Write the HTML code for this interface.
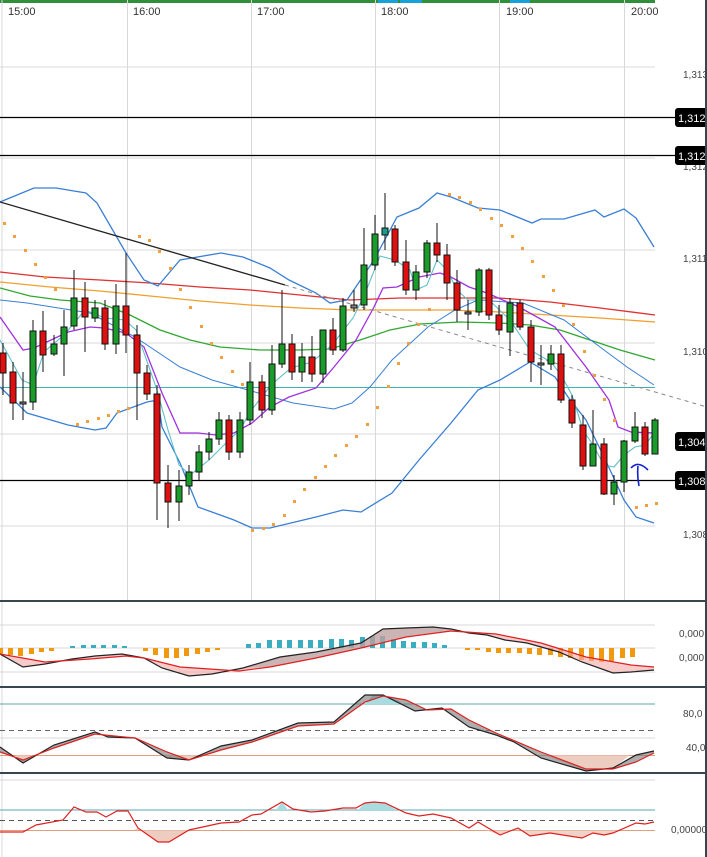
<!DOCTYPE html>
<html><head><meta charset="utf-8"><style>
html,body{margin:0;padding:0;background:#fff;}
svg{display:block;font-family:"Liberation Sans",sans-serif;}
</style></head><body>
<svg width="707" height="857" viewBox="0 0 707 857" xmlns="http://www.w3.org/2000/svg">
<rect width="707" height="857" fill="#fff"/>
<!-- top bar -->
<rect x="0" y="0" width="655" height="3" fill="#2f8f3a"/>
<rect x="378" y="0" width="20" height="3" fill="#18a0d8"/>
<rect x="400" y="0" width="22" height="3" fill="#18a0d8"/>
<rect x="510" y="0" width="20" height="3" fill="#18a0d8"/>
<!-- grid vertical -->
<g stroke="#d8d8d8" stroke-width="1">
<line x1="2" y1="0" x2="2" y2="857"/>
<line x1="127.5" y1="0" x2="127.5" y2="601"/>
<line x1="251.5" y1="0" x2="251.5" y2="601"/>
<line x1="375.5" y1="0" x2="375.5" y2="601"/>
<line x1="499.5" y1="0" x2="499.5" y2="601"/>
<line x1="624.5" y1="0" x2="624.5" y2="601"/>
<line x1="0" y1="67" x2="655" y2="67"/>
<line x1="0" y1="158" x2="655" y2="158"/>
<line x1="0" y1="250" x2="655" y2="250"/>
<line x1="0" y1="343" x2="655" y2="343"/>
<line x1="0" y1="434" x2="655" y2="434"/>
<line x1="0" y1="526" x2="655" y2="526"/>
<line x1="0" y1="625" x2="655" y2="625"/>
<line x1="0" y1="648" x2="655" y2="648"/>
<line x1="0" y1="672" x2="655" y2="672"/>
<line x1="0" y1="738" x2="655" y2="738"/>
<line x1="0" y1="780" x2="655" y2="780"/>
</g>
<!-- time labels -->
<g font-size="11" fill="#333">
<text x="8" y="15">15:00</text><text x="133" y="15">16:00</text><text x="257" y="15">17:00</text>
<text x="381" y="15">18:00</text><text x="506" y="15">19:00</text><text x="631" y="15">20:00</text>
</g>
<!-- price labels -->
<g font-size="10" fill="#444">
<text x="683" y="78">1,313</text><text x="683" y="170">1,312</text><text x="683" y="262">1,311</text>
<text x="683" y="355">1,310</text><text x="683" y="538">1,308</text>
<text x="679" y="637">0,000</text><text x="679" y="661">0,000</text>
<text x="683" y="717">80,0</text><text x="686" y="751">40,0</text>
<text x="671" y="833">0,00000</text>
</g>
<!-- horizontal lines -->
<line x1="0" y1="117.5" x2="707" y2="117.5" stroke="#000" stroke-width="1.3"/>
<line x1="0" y1="155.5" x2="707" y2="155.5" stroke="#000" stroke-width="1.3"/>
<line x1="0" y1="480.5" x2="707" y2="480.5" stroke="#000" stroke-width="1.3"/>
<line x1="0" y1="387.5" x2="655" y2="387.5" stroke="#3bb3b3" stroke-width="1"/>
<!-- MAs -->
<g fill="none" stroke-width="1.3">
<polyline stroke="#e03030" points="0,272 45,277 100,280 150,283 200,287 250,290 300,295 350,300 400,298 450,298 500,298 550,302 600,308 655,315"/>
<polyline stroke="#f0a030" points="0,282 50,287 100,291 150,296 200,301 250,305 300,308 350,310 400,310 450,310 500,312 550,315 600,318 655,322"/>
<polyline stroke="#30a830" points="0,288 30,296 60,300 100,303 130,315 160,330 190,340 220,347 260,350 300,350 330,349 360,340 390,330 420,324 460,322 500,323 530,325 560,330 590,340 620,350 655,360"/>
<polyline stroke="#3a7fd5" points="0,202 34,188 56,188 86,193 97,203 126,253 144,280 158,286 180,260 221,253 243,257 270,268 289,280 316,293 330,303 347,300 374,260 397,217 419,208 437,193 451,197 478,208 500,210 532,223 541,219 564,219 595,210 604,217 624,209 636,218 654,247"/>
<polyline stroke="#3a7fd5" points="0,387 27,413 68,425 95,430 106,428 117,413 147,402 158,400 162,427 180,463 198,507 234,520 252,528 270,528 316,517 343,510 361,512 392,493 419,460 451,423 478,390 500,380 530,362 555,377 568,397 586,420 604,457 624,500 636,517 654,523"/>
<polyline stroke="#3a7fd5" stroke-width="1" points="0,300 27,303 90,313 135,337 180,367 212,380 248,390 293,403 334,409 352,403 370,387 392,360 428,327 455,310 478,300 523,303 564,320 600,347 627,367 654,385"/>
<polyline stroke="#a030e0" points="0,317 23,350 34,348 68,332 90,327 104,328 126,333 144,347 162,393 180,433 198,433 216,435 234,433 252,423 270,407 289,397 316,388 334,367 356,340 374,307 383,288 397,287 419,277 440,273 451,277 469,287 487,293 496,297 519,307 555,327 586,367 609,400 618,427 631,432 654,433"/>
<polyline stroke="#5ec0c8" stroke-width="1.1" points="0,340 22,380 33,385 44,352 64,335 85,310 105,318 125,320 136,330 157,390 168,430 179,465 190,475 209,460 229,440 240,430 250,412 271,385 291,368 312,362 332,345 353,318 364,296 380,256 395,260 410,270 416,290 427,285 437,260 447,270 457,290 468,300 479,300 489,300 510,320 530,350 551,362 561,375 572,395 583,430 593,445 604,465 614,467 624,455 635,447 645,445 655,432"/>
</g>
<line x1="0" y1="202" x2="285" y2="285" stroke="#222" stroke-width="1.3"/>
<line x1="285" y1="285" x2="707" y2="407" stroke="#888" stroke-width="1" stroke-dasharray="4,4"/>
<!-- SAR dots -->
<g fill="#f0a040">
<rect x="3" y="222" width="3" height="3"/><rect x="13" y="235" width="3" height="3"/><rect x="24" y="249" width="3" height="3"/><rect x="34" y="263" width="3" height="3"/><rect x="44" y="276" width="3" height="3"/><rect x="54" y="288" width="3" height="3"/>
<rect x="76" y="423" width="3" height="3"/><rect x="86" y="420" width="3" height="3"/><rect x="97" y="417" width="3" height="3"/><rect x="107" y="414" width="3" height="3"/><rect x="117" y="410" width="3" height="3"/><rect x="127" y="407" width="3" height="3"/>
<rect x="138" y="235" width="3" height="3"/><rect x="148" y="239" width="3" height="3"/><rect x="158" y="250" width="3" height="3"/><rect x="169" y="267" width="3" height="3"/><rect x="179" y="288" width="3" height="3"/><rect x="189" y="306" width="3" height="3"/><rect x="200" y="325" width="3" height="3"/><rect x="210" y="342" width="3" height="3"/><rect x="220" y="356" width="3" height="3"/><rect x="231" y="370" width="3" height="3"/><rect x="241" y="383" width="3" height="3"/>
<rect x="251" y="529" width="3" height="3"/><rect x="262" y="527" width="3" height="3"/><rect x="272" y="523" width="3" height="3"/><rect x="283" y="514" width="3" height="3"/><rect x="293" y="500" width="3" height="3"/><rect x="303" y="488" width="3" height="3"/><rect x="314" y="476" width="3" height="3"/><rect x="324" y="465" width="3" height="3"/><rect x="334" y="454" width="3" height="3"/><rect x="345" y="444" width="3" height="3"/><rect x="355" y="435" width="3" height="3"/><rect x="366" y="423" width="3" height="3"/><rect x="376" y="406" width="3" height="3"/><rect x="387" y="385" width="3" height="3"/><rect x="397" y="362" width="3" height="3"/><rect x="407" y="342" width="3" height="3"/><rect x="417" y="323" width="3" height="3"/><rect x="428" y="308" width="3" height="3"/>
<rect x="448" y="193" width="3" height="3"/><rect x="458" y="196" width="3" height="3"/><rect x="469" y="201" width="3" height="3"/><rect x="479" y="208" width="3" height="3"/><rect x="490" y="217" width="3" height="3"/><rect x="500" y="224" width="3" height="3"/><rect x="511" y="235" width="3" height="3"/><rect x="521" y="247" width="3" height="3"/><rect x="531" y="260" width="3" height="3"/><rect x="542" y="275" width="3" height="3"/><rect x="552" y="289" width="3" height="3"/><rect x="562" y="304" width="3" height="3"/><rect x="572" y="323" width="3" height="3"/><rect x="583" y="350" width="3" height="3"/><rect x="593" y="374" width="3" height="3"/><rect x="603" y="398" width="3" height="3"/><rect x="613" y="419" width="3" height="3"/>
<rect x="635" y="506" width="3" height="3"/><rect x="645" y="504" width="3" height="3"/><rect x="655" y="502" width="3" height="3"/>
</g>
<!-- candles -->
<g stroke="#111" stroke-width="1">
<g id="w">
<line x1="3" y1="343" x2="3" y2="395"/><line x1="13" y1="362" x2="13" y2="420"/><line x1="23" y1="372" x2="23" y2="420"/><line x1="33" y1="320" x2="33" y2="410"/><line x1="43" y1="311" x2="43" y2="372"/><line x1="54" y1="335" x2="54" y2="356"/><line x1="64" y1="310" x2="64" y2="376"/><line x1="74" y1="270" x2="74" y2="330"/><line x1="85" y1="282" x2="85" y2="352"/><line x1="95" y1="300" x2="95" y2="322"/><line x1="105" y1="300" x2="105" y2="350"/><line x1="116" y1="284" x2="116" y2="354"/><line x1="126" y1="253" x2="126" y2="353"/><line x1="137" y1="325" x2="137" y2="420"/><line x1="147" y1="365" x2="147" y2="400"/><line x1="157" y1="385" x2="157" y2="520"/><line x1="168" y1="465" x2="168" y2="528"/><line x1="179" y1="470" x2="179" y2="521"/><line x1="189" y1="465" x2="189" y2="495"/><line x1="199" y1="445" x2="199" y2="480"/><line x1="209" y1="432" x2="209" y2="460"/><line x1="219" y1="412" x2="219" y2="445"/><line x1="229" y1="415" x2="229" y2="460"/><line x1="240" y1="412" x2="240" y2="458"/><line x1="250" y1="362" x2="250" y2="425"/><line x1="262" y1="375" x2="262" y2="418"/><line x1="272" y1="345" x2="272" y2="415"/><line x1="282" y1="290" x2="282" y2="368"/><line x1="292" y1="334" x2="292" y2="380"/><line x1="302" y1="343" x2="302" y2="382"/><line x1="312" y1="336" x2="312" y2="382"/><line x1="323" y1="330" x2="323" y2="383"/><line x1="333" y1="318" x2="333" y2="355"/><line x1="343" y1="298" x2="343" y2="352"/><line x1="354" y1="290" x2="354" y2="312"/><line x1="364" y1="228" x2="364" y2="310"/><line x1="375" y1="215" x2="375" y2="270"/><line x1="385" y1="193" x2="385" y2="250"/><line x1="395" y1="225" x2="395" y2="266"/><line x1="406" y1="240" x2="406" y2="295"/><line x1="416" y1="265" x2="416" y2="300"/><line x1="427" y1="240" x2="427" y2="278"/><line x1="437" y1="223" x2="437" y2="262"/><line x1="447" y1="244" x2="447" y2="300"/><line x1="457" y1="270" x2="457" y2="322"/><line x1="468" y1="300" x2="468" y2="330"/><line x1="479" y1="268" x2="479" y2="316"/><line x1="489" y1="268" x2="489" y2="320"/><line x1="499" y1="305" x2="499" y2="335"/><line x1="510" y1="298" x2="510" y2="356"/><line x1="520" y1="300" x2="520" y2="330"/><line x1="531" y1="320" x2="531" y2="382"/><line x1="541" y1="345" x2="541" y2="385"/><line x1="551" y1="345" x2="551" y2="370"/><line x1="561" y1="345" x2="561" y2="403"/><line x1="572" y1="395" x2="572" y2="428"/><line x1="583" y1="415" x2="583" y2="470"/><line x1="593" y1="410" x2="593" y2="466"/><line x1="604" y1="438" x2="604" y2="495"/><line x1="614" y1="475" x2="614" y2="505"/><line x1="624" y1="440" x2="624" y2="492"/><line x1="635" y1="412" x2="635" y2="443"/><line x1="645" y1="422" x2="645" y2="456"/><line x1="655" y1="418" x2="655" y2="454"/>
</g>
<g fill="#e01010">
<rect x="0" y="353" width="6" height="20"/><rect x="10" y="372" width="6" height="31"/><rect x="40" y="331" width="6" height="24"/><rect x="82" y="298" width="6" height="19"/><rect x="102" y="308" width="6" height="36"/><rect x="123" y="306" width="6" height="29"/><rect x="134" y="335" width="6" height="38"/><rect x="144" y="373" width="6" height="21"/><rect x="154" y="394" width="6" height="89"/><rect x="165" y="483" width="6" height="19"/><rect x="226" y="420" width="6" height="32"/><rect x="259" y="382" width="6" height="28"/><rect x="289" y="344" width="6" height="28"/><rect x="309" y="357" width="6" height="17"/><rect x="330" y="330" width="6" height="20"/><rect x="392" y="229" width="6" height="33"/><rect x="403" y="262" width="6" height="28"/><rect x="434" y="243" width="6" height="12"/><rect x="444" y="255" width="6" height="28"/><rect x="454" y="283" width="6" height="27"/><rect x="486" y="270" width="6" height="45"/><rect x="496" y="315" width="6" height="15"/><rect x="517" y="303" width="6" height="24"/><rect x="528" y="327" width="6" height="35"/><rect x="558" y="354" width="6" height="46"/><rect x="569" y="400" width="6" height="23"/><rect x="580" y="425" width="6" height="41"/><rect x="601" y="444" width="6" height="50"/><rect x="642" y="427" width="6" height="27"/>
</g>
<g fill="#1a9c2a">
<rect x="30" y="331" width="6" height="71"/><rect x="51" y="344" width="6" height="10"/><rect x="61" y="327" width="6" height="17"/><rect x="71" y="298" width="6" height="28"/><rect x="92" y="308" width="6" height="10"/><rect x="113" y="306" width="6" height="38"/><rect x="176" y="486" width="6" height="16"/><rect x="186" y="472" width="6" height="14"/><rect x="196" y="452" width="6" height="20"/><rect x="206" y="439" width="6" height="13"/><rect x="216" y="420" width="6" height="19"/><rect x="237" y="420" width="6" height="32"/><rect x="247" y="382" width="6" height="38"/><rect x="269" y="364" width="6" height="46"/><rect x="279" y="344" width="6" height="20"/><rect x="299" y="357" width="6" height="15"/><rect x="320" y="330" width="6" height="44"/><rect x="340" y="306" width="6" height="44"/><rect x="361" y="265" width="6" height="40"/><rect x="372" y="234" width="6" height="31"/><rect x="382" y="228" width="6" height="7" fill="#1a9c8a"/><rect x="413" y="272" width="6" height="18"/><rect x="424" y="243" width="6" height="29"/><rect x="476" y="270" width="6" height="42"/><rect x="507" y="303" width="6" height="29"/><rect x="548" y="354" width="6" height="10"/><rect x="590" y="444" width="6" height="22"/><rect x="611" y="482" width="6" height="12"/><rect x="621" y="441" width="6" height="41"/><rect x="632" y="427" width="6" height="14"/><rect x="652" y="420" width="6" height="34"/>
</g>
<g fill="#888"><rect x="20" y="402" width="6" height="2"/><rect x="351" y="305" width="6" height="3"/><rect x="465" y="312" width="6" height="2"/><rect x="538" y="363" width="6" height="2"/></g>
</g>
<!-- blue handwritten arrow -->
<path d="M631,468 Q638,460 648,470 M638,466 Q637,476 639,486" fill="none" stroke="#1020d0" stroke-width="1.6"/>
<!-- price boxes -->
<g>
<rect x="675" y="108" width="34" height="19" rx="3" fill="#000"/><text x="678" y="122" font-size="11" fill="#fff">1,312</text>
<rect x="675" y="146" width="34" height="19" rx="3" fill="#000"/><text x="678" y="160" font-size="11" fill="#fff">1,312</text>
<rect x="675" y="432" width="34" height="19" rx="3" fill="#000"/><text x="678" y="446" font-size="11" fill="#fff">1,304</text>
<rect x="675" y="471" width="34" height="19" rx="3" fill="#000"/><text x="678" y="485" font-size="11" fill="#fff">1,308</text>
</g>
<!-- panel separators -->
<g fill="#37474f">
<rect x="0" y="600" width="707" height="2"/>
<rect x="0" y="686" width="707" height="2"/>
<rect x="0" y="772" width="707" height="2"/>
<rect x="705" y="0" width="2" height="857"/>
</g>
<!-- MACD -->
<g fill="#f0980e">
<rect x="-2" y="648" width="5" height="6"/><rect x="8" y="648" width="5" height="7"/><rect x="18" y="648" width="5" height="8"/><rect x="29" y="648" width="5" height="6"/><rect x="39" y="648" width="5" height="4"/><rect x="49" y="648" width="5" height="3"/>
<rect x="143" y="648" width="5" height="3"/><rect x="153" y="648" width="5" height="7"/><rect x="164" y="648" width="5" height="10"/><rect x="174" y="648" width="5" height="10"/><rect x="184" y="648" width="5" height="8"/><rect x="195" y="648" width="5" height="6"/><rect x="205" y="648" width="5" height="4"/><rect x="215" y="648" width="5" height="2"/>
<rect x="465" y="648" width="5" height="2"/><rect x="475" y="648" width="5" height="2"/><rect x="486" y="648" width="5" height="4"/><rect x="496" y="648" width="5" height="5"/><rect x="506" y="648" width="5" height="5"/><rect x="517" y="648" width="5" height="5"/><rect x="527" y="648" width="5" height="6"/><rect x="537" y="648" width="5" height="7"/><rect x="548" y="648" width="5" height="7"/><rect x="558" y="648" width="5" height="9"/><rect x="568" y="648" width="5" height="10"/><rect x="579" y="648" width="5" height="12"/><rect x="589" y="648" width="5" height="13"/><rect x="599" y="648" width="5" height="14"/><rect x="609" y="648" width="5" height="13"/><rect x="620" y="648" width="5" height="10"/><rect x="630" y="648" width="5" height="9"/>
</g>
<g fill="#3aaec0">
<rect x="70" y="646" width="5" height="2"/><rect x="81" y="645" width="5" height="3"/><rect x="91" y="645" width="5" height="3"/><rect x="101" y="645" width="5" height="3"/><rect x="112" y="645" width="5" height="3"/><rect x="122" y="646" width="5" height="2"/>
<rect x="246" y="644" width="5" height="4"/><rect x="256" y="643" width="5" height="5"/><rect x="267" y="640" width="5" height="8"/><rect x="277" y="640" width="5" height="8"/><rect x="287" y="640" width="5" height="8"/><rect x="298" y="640" width="5" height="8"/><rect x="308" y="640" width="5" height="8"/><rect x="318" y="640" width="5" height="8"/><rect x="329" y="639" width="5" height="9"/><rect x="339" y="639" width="5" height="9"/><rect x="349" y="640" width="5" height="8"/><rect x="360" y="637" width="5" height="11"/><rect x="370" y="636" width="5" height="12"/><rect x="380" y="636" width="5" height="12"/><rect x="391" y="639" width="5" height="9"/><rect x="401" y="641" width="5" height="7"/><rect x="411" y="642" width="5" height="6"/><rect x="422" y="642" width="5" height="6"/><rect x="432" y="643" width="5" height="5"/><rect x="442" y="645" width="5" height="3"/>
</g>
<polygon fill="#f3a8a8" fill-opacity="0.6" points="0,654 23,667 45,664 72,659 95,656 122,654 144,658 162,668 189,676 212,674 243,668 280,657 316,652 361,643 383,629 406,628 433,627 451,629 469,633 487,635 505,640 527,643 559,652 582,662 613,673 631,672 654,670 654,667 631,665 586,657 541,643 496,634 451,631 406,637 361,648 316,658 270,667 239,671 180,667 144,658 126,656 90,659 45,662 0,654"/>
<polygon fill="#999" fill-opacity="0.45" points="243,668 280,657 316,652 361,643 383,629 406,628 433,627 451,629 451,631 406,637 361,648 316,658 270,667"/>
<polyline fill="none" stroke="#222" stroke-width="1.2" points="0,654 23,667 45,664 72,659 95,656 122,654 144,658 162,668 189,676 212,674 243,668 280,657 316,652 361,643 383,629 406,628 433,627 451,629 469,633 487,635 505,640 527,643 559,652 582,662 613,673 631,672 654,670"/>
<polyline fill="none" stroke="#e02020" stroke-width="1.2" points="0,654 45,662 90,659 126,656 144,658 180,667 239,671 270,667 316,658 361,648 406,637 451,631 496,634 541,643 586,657 631,665 654,667"/>
<!-- Stoch -->
<line x1="0" y1="704" x2="655" y2="704" stroke="#5aa8b0"/>
<line x1="0" y1="730.5" x2="655" y2="730.5" stroke="#666" stroke-dasharray="5,4"/>
<line x1="0" y1="755.5" x2="655" y2="755.5" stroke="#e0a080"/>
<polygon fill="#a8dce0" points="365,704 373,695 383,695 397,700 404,704"/>
<polygon fill="#e8c0b0" fill-opacity="0.8" points="545,755 586,771 613,768 630,755"/>
<polygon fill="#e8c0b0" fill-opacity="0.8" points="15,755 23,763 35,755"/>
<polygon fill="#e8c0b0" fill-opacity="0.8" points="160,755 167,758 189,760 205,755"/>
<polygon fill="#777" fill-opacity="0.6" points="0,747 23,763 54,745 95,732 108,737 135,738 167,758 189,760 221,746 252,740 298,723 334,722 365,695 383,695 415,711 442,708 469,727 496,735 514,742 541,758 586,771 613,768 636,755 654,751 654,753 636,762 613,769 586,769 541,752 496,733 469,720 451,709 427,710 406,700 383,696 365,702 334,724 298,726 252,742 221,750 189,760 167,752 135,738 95,734 54,748 23,760 0,752"/>
<polyline fill="none" stroke="#222" stroke-width="1.2" points="0,747 23,763 54,745 95,732 108,737 135,738 167,758 189,760 221,746 252,740 298,723 334,722 365,695 383,695 415,711 442,708 469,727 496,735 514,742 541,758 586,771 613,768 636,755 654,751"/>
<polyline fill="none" stroke="#e02020" stroke-width="1.2" points="0,752 23,760 54,748 95,734 135,738 167,752 189,760 221,750 252,742 298,726 334,724 365,702 383,696 406,700 427,710 451,709 469,720 496,733 541,752 586,769 613,769 636,762 654,753"/>
<!-- bottom -->
<line x1="0" y1="810" x2="655" y2="810" stroke="#5aa8b0"/>
<line x1="0" y1="820.5" x2="655" y2="820.5" stroke="#555" stroke-dasharray="5,4"/>
<line x1="0" y1="830.5" x2="655" y2="830.5" stroke="#e0a080"/>
<polygon fill="#a8dce0" points="276,810 282,802 288,810"/>
<polygon fill="#a8dce0" points="358,810 365,803 374,802 385,803 397,810"/>
<polygon fill="#e8c0b0" fill-opacity="0.8" points="134,830 138,828 158,842 169,842 189,830"/>
<polygon fill="#e8c0b0" fill-opacity="0.7" points="485,830 500,835 518,828 530,836 550,833 582,838 593,833 604,835 613,833 620,830"/>
<polyline fill="none" stroke="#e02020" stroke-width="1.2" points="0,832 23,832 36,825 63,820 74,807 86,812 97,812 106,817 117,811 128,811 138,828 158,842 169,842 189,830 221,823 239,822 252,815 261,814 282,802 293,809 311,812 325,811 343,808 356,808 365,803 374,802 385,803 406,813 419,816 433,814 451,818 469,828 478,822 500,835 518,828 530,836 550,833 582,838 593,833 604,835 613,833 636,823 645,824 654,822"/>
</svg>
</body></html>
